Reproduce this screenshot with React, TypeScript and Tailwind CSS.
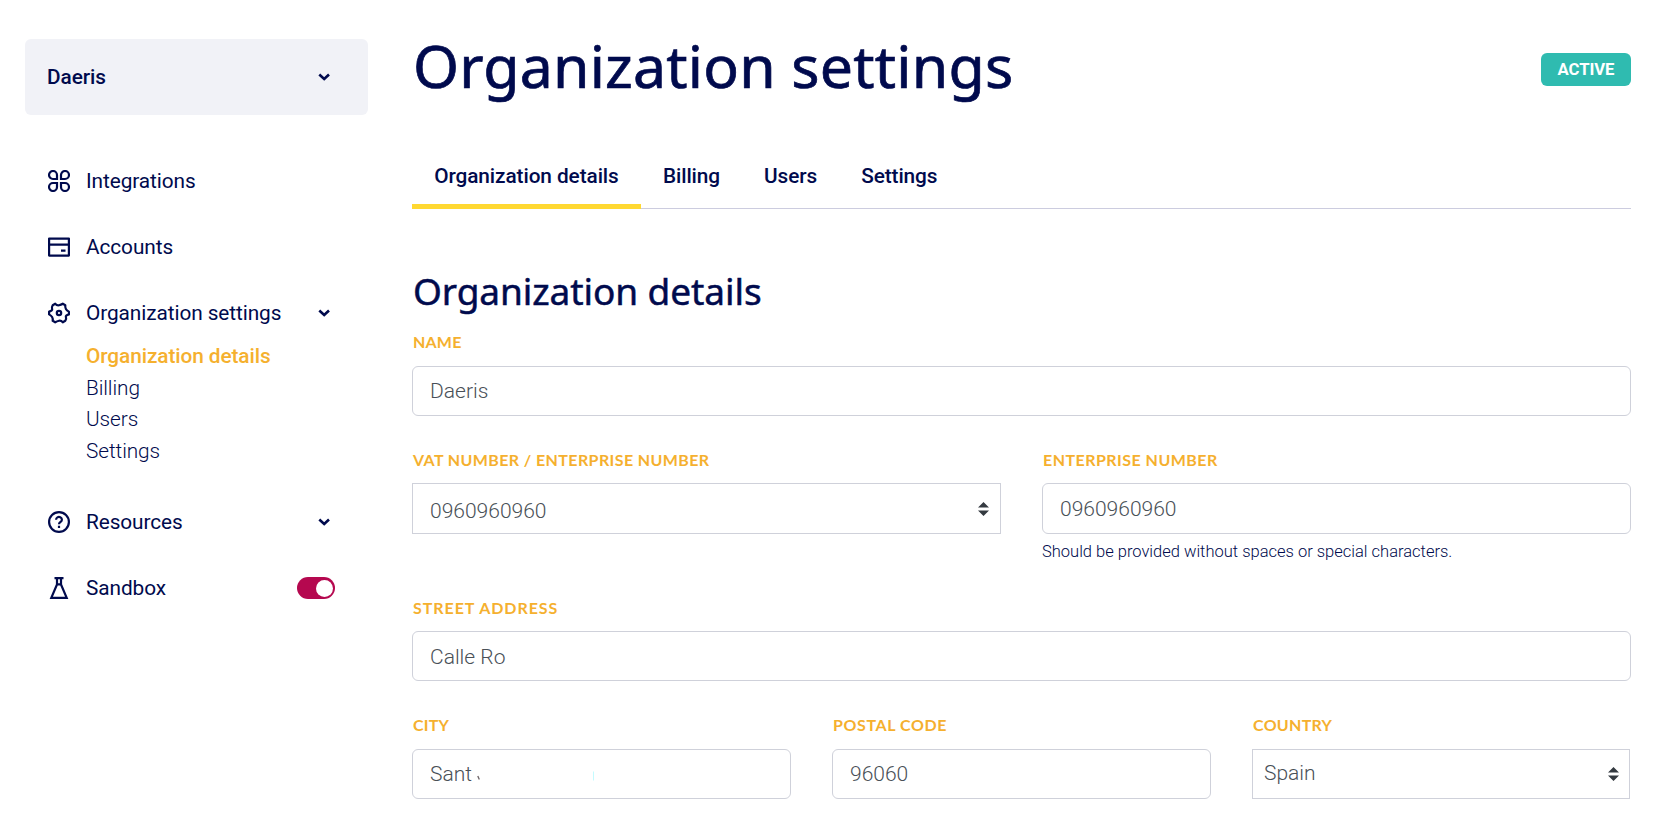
import type { ReactNode } from 'react';

function Chevron() {
  return (
    <svg width="12" height="8" viewBox="0 0 12 8" fill="none" stroke="#000a4d" strokeWidth="2.6">
      <path d="M1.300 1.500 6.200 6l4.800-4.500" />
    </svg>
  );
}

function Carets() {
  return (
    <svg width="11" height="14" viewBox="0 0 4 5" preserveAspectRatio="none" fill="#343a40">
      <path d="M2 0 0 2h4zM2 5 0 3h4z" />
    </svg>
  );
}

function IconFrame({ children }: { children: ReactNode }) {
  return (
    <svg
      className="shrink-0"
      width="22"
      height="22"
      viewBox="0 0 22 22"
      fill="none"
      stroke="#000a4d"
      strokeWidth="2.2"
    >
      {children}
    </svg>
  );
}

const icons = {
  integrations: (
    <IconFrame>
      <path d="M9 9H5a4 4 0 1 1 4-4zM13 9V5a4 4 0 1 1 4 4zM9 13v4a4 4 0 1 1-4-4zM13 13h4a4 4 0 1 1-4 4z" />
    </IconFrame>
  ),
  accounts: (
    <IconFrame>
      <path d="M1.100 2.600h19.800v17H1.100zM1.100 8.600h19.800M13 14.600h4.500" strokeLinejoin="round" />
    </IconFrame>
  ),
  settings: (
    <IconFrame>
      <path
        strokeLinejoin="round"
        d="M20.900 9.600V12.400Q17.200 13.400 17.900 15T17.300 18.800L14.800 20.300Q13 18.300 11 18.800T7.200 20.300L4.700 18.800Q5 16.500 4.100 15T1.100 12.400V9.600Q4.800 8.600 4.100 7T4.700 3.200L7.200 1.700Q9 3.700 11 3.200T14.800 1.700L17.300 3.200Q17 5.500 17.900 7T20.900 9.600Z"
      />
      <circle cx="11" cy="11" r="2.200" />
    </IconFrame>
  ),
  resources: (
    <IconFrame>
      <circle cx="11" cy="11" r="9.900" />
      <path d="M8.100 8.700a2.900 2.700 0 1 1 4.600 2.100c-1 .7-1.700 1.100-1.700 2.400M11 14.700v2.200" />
    </IconFrame>
  ),
  sandbox: (
    <IconFrame>
      <path d="M6.500 1.100h9M9 1v6.500L3.300 20.900h15.400L13 7.500V1M9 7.300h4" />
    </IconFrame>
  ),
};

function NavRow({ icon, label, children }: { icon: ReactNode; label: string; children?: ReactNode }) {
  return (
    <div className="flex h-[66px] items-center pl-[23px] pr-[33px]">
      {icon}
      <span className="ml-4 flex-1 pt-[2px]">{label}</span>
      {children}
    </div>
  );
}

interface FieldProps {
  label: string;
  box: string;
  tracking?: string;
  children: ReactNode;
}

function Field({ label, box, tracking = 'tracking-[0.4px]', children }: FieldProps) {
  return (
    <div>
      <div
        className={`h-6 pl-px font-[Lato,sans-serif] text-[16px] leading-6 font-bold whitespace-nowrap text-[#f5b02e] ${tracking}`}
      >
        {label}
      </div>
      <div className={`flex items-center border border-[#cfd1da] text-[21px] font-light tracking-normal text-[#495057] ${box}`}>
        {children}
      </div>
    </div>
  );
}

export default function App() {
  return (
    <div className="flex h-[821px] w-[1655px] overflow-hidden bg-white font-[Roboto,sans-serif] text-[20.8px] tracking-[-0.08px] text-[#000a4d]">
      <aside className="w-[368px] pt-[39px] pl-[25px]">
        <div className="flex h-[76px] items-center justify-between rounded-md bg-[#f1f2f7] pr-[38px] pl-[22px] font-medium">
          <span className="pt-[2px]">Daeris</span>
          <Chevron />
        </div>
        <nav className="mt-[33px]">
          <NavRow icon={icons.integrations} label="Integrations" />
          <NavRow icon={icons.accounts} label="Accounts" />
          <NavRow icon={icons.settings} label="Organization settings">
            <span className="mr-[5px]"><Chevron /></span>
          </NavRow>
          <ul className="-mt-[5px] pl-[61px] leading-[31.5px] font-light">
            <li className="font-medium text-[#f5b02e]">Organization details</li>
            <li>Billing</li>
            <li>Users</li>
            <li>Settings</li>
          </ul>
          <div className="mt-[22px]">
            <NavRow icon={icons.resources} label="Resources">
              <span className="mr-[5px]"><Chevron /></span>
            </NavRow>
            <NavRow icon={icons.sandbox} label="Sandbox">
              <span className="flex h-[22px] w-[38px] items-center justify-end rounded-full bg-[#b5084f] pr-[2px]">
                <span className="size-[17px] rounded-full bg-white" />
              </span>
            </NavRow>
          </div>
        </nav>
      </aside>

      <main className="w-[1263px] pl-[44px]">
        <header className="flex h-[148px] items-start justify-between">
          <h1 className="mt-[29px] ml-px font-['Noto_Sans',sans-serif] text-[59px] leading-[72px] tracking-[0.2px] [-webkit-text-stroke:0.7px_#000a4d]">
            Organization settings
          </h1>
          <span className="mt-[53px] flex h-[33px] w-[90px] items-center justify-center rounded-md bg-[#2fbbb0] text-[16.700px] font-bold text-white">
            ACTIVE
          </span>
        </header>

        <div className="flex h-[61px] font-medium shadow-[inset_0_-1px_0_#ccccdf]">
          <div className="flex items-center border-b-[5px] border-[#ffd831] px-[22.200px] pt-[2px]">Organization details</div>
          <div className="flex items-center px-[22px] pt-[2px] pb-[5px]">Billing</div>
          <div className="flex items-center px-[22px] pt-[2px] pb-[5px]">Users</div>
          <div className="flex items-center px-[22px] pt-[2px] pb-[5px]">Settings</div>
        </div>

        <h2 className="mt-[60px] ml-px font-['Noto_Sans',sans-serif] text-[37px] leading-[44px] [-webkit-text-stroke:0.5px_#000a4d]">
          Organization details
        </h2>

        <div className="mt-[17px]">
          <Field label="NAME" tracking="tracking-[0.2px]" box="mt-3 h-[50px] rounded-md pt-[2px] pl-[17px]">Daeris</Field>
        </div>

        <div className="mt-8 grid grid-cols-2 gap-x-[41px]">
          <Field label="VAT NUMBER / ENTERPRISE NUMBER" box="mt-[11px] h-[51px] justify-between pt-[6px] pl-[17px] pr-[11px]">
            <span>0960960960</span>
            <span className="-mt-[5px]"><Carets /></span>
          </Field>
          <div>
            <Field label="ENTERPRISE NUMBER" tracking="tracking-[0.47px]" box="mt-[11px] h-[51px] rounded-md pt-[2px] pl-[17px]">0960960960</Field>
            <p className="mt-[6px] text-[16.500px] leading-6 font-light tracking-normal">
              Should be provided without spaces or special characters.
            </p>
          </div>
        </div>

        <div className="mt-8">
          <Field label="STREET ADDRESS" tracking="tracking-[0.95px]" box="mt-[11px] h-[50px] rounded-md pt-[3px] pl-[17px]">Calle Ro</Field>
        </div>

        <div className="mt-8 grid grid-cols-3 gap-x-[41px]">
          <Field label="CITY" tracking="tracking-[0.2px]" box="mt-3 h-[50px] rounded-md pt-[2px] pl-[17px]">
            <span>Sant</span>
            <svg className="ml-[5px]" width="118" height="14" viewBox="0 0 118 14" fill="none">
              <path d="M.8 8 2.300 11.500" stroke="#6b6266" strokeWidth="1.300" />
              <path d="M116.500 3.500v9" stroke="#c4fbff" />
            </svg>
          </Field>
          <Field label="POSTAL CODE" tracking="tracking-[0.6px]" box="mt-3 h-[50px] rounded-md pt-[2px] pl-[17px]">96060</Field>
          <Field label="COUNTRY" tracking="tracking-[0.3px]" box="mt-3 mr-px h-[50px] justify-between pb-px pl-[11px] pr-[10px]">
            <span>Spain</span>
            <span className="mt-px"><Carets /></span>
          </Field>
        </div>
      </main>
    </div>
  );
}
